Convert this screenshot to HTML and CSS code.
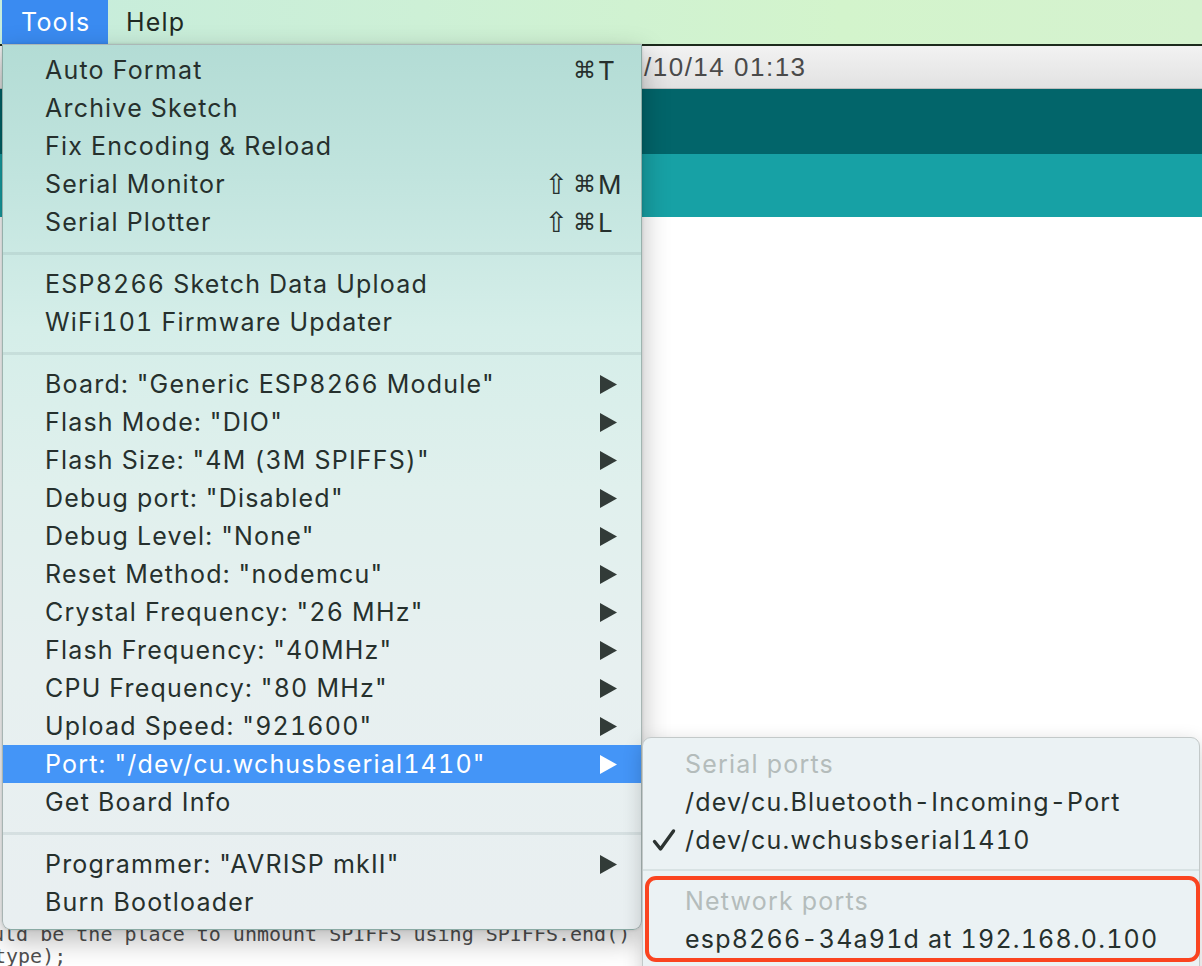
FILE: index.html
```html
<!DOCTYPE html>
<html>
<head>
<meta charset="utf-8">
<title>Arduino Tools menu</title>
<link rel="stylesheet" href="styles.css">
</head>
<body>
<div class="screen">
  <header class="menubar">
    <div class="mb-item active">Tools</div>
    <div class="mb-item">Help</div>
  </header>

  <div class="window">
    <div class="titlebar"><span class="title">/10/14 01:13</span></div>
    <div class="toolbar"></div>
    <div class="tabbar"></div>
    <div class="editor">
      <div class="code-line first">ould be the place to unmount SPIFFS using SPIFFS.end()</div>
      <div class="code-line second">type);</div>
    </div>
  </div>

  <nav class="menu main-menu">
    <div class="mi"><span class="label">Auto Format</span><span class="sc"><span class="mods"><span class="mod">⌘</span></span><span class="key">T</span></span></div>
    <div class="mi"><span class="label">Archive Sketch</span></div>
    <div class="mi"><span class="label">Fix Encoding &amp; Reload</span></div>
    <div class="mi"><span class="label">Serial Monitor</span><span class="sc"><span class="mods"><span class="mod shift">⇧</span><span class="mod">⌘</span></span><span class="key">M</span></span></div>
    <div class="mi"><span class="label">Serial Plotter</span><span class="sc"><span class="mods"><span class="mod shift">⇧</span><span class="mod">⌘</span></span><span class="key">L</span></span></div>
    <div class="sep"></div>
    <div class="mi"><span class="label">ESP8266 Sketch Data Upload</span></div>
    <div class="mi"><span class="label">WiFi101 Firmware Updater</span></div>
    <div class="sep"></div>
    <div class="mi"><span class="label">Board: "Generic ESP8266 Module"</span><svg class="arrow" viewBox="0 0 17 19"><polygon points="0,0 17,9.5 0,19"/></svg></div>
    <div class="mi"><span class="label">Flash Mode: "DIO"</span><svg class="arrow" viewBox="0 0 17 19"><polygon points="0,0 17,9.5 0,19"/></svg></div>
    <div class="mi"><span class="label">Flash Size: "4M (3M SPIFFS)"</span><svg class="arrow" viewBox="0 0 17 19"><polygon points="0,0 17,9.5 0,19"/></svg></div>
    <div class="mi"><span class="label">Debug port: "Disabled"</span><svg class="arrow" viewBox="0 0 17 19"><polygon points="0,0 17,9.5 0,19"/></svg></div>
    <div class="mi"><span class="label">Debug Level: "None"</span><svg class="arrow" viewBox="0 0 17 19"><polygon points="0,0 17,9.5 0,19"/></svg></div>
    <div class="mi"><span class="label">Reset Method: "nodemcu"</span><svg class="arrow" viewBox="0 0 17 19"><polygon points="0,0 17,9.5 0,19"/></svg></div>
    <div class="mi"><span class="label">Crystal Frequency: "26 MHz"</span><svg class="arrow" viewBox="0 0 17 19"><polygon points="0,0 17,9.5 0,19"/></svg></div>
    <div class="mi"><span class="label">Flash Frequency: "40MHz"</span><svg class="arrow" viewBox="0 0 17 19"><polygon points="0,0 17,9.5 0,19"/></svg></div>
    <div class="mi"><span class="label">CPU Frequency: "80 MHz"</span><svg class="arrow" viewBox="0 0 17 19"><polygon points="0,0 17,9.5 0,19"/></svg></div>
    <div class="mi"><span class="label">Upload Speed: "921600"</span><svg class="arrow" viewBox="0 0 17 19"><polygon points="0,0 17,9.5 0,19"/></svg></div>
    <div class="mi selected"><span class="label">Port: "/dev/cu.wchusbserial1410"</span><svg class="arrow" viewBox="0 0 17 19"><polygon points="0,0 17,9.5 0,19"/></svg></div>
    <div class="mi"><span class="label">Get Board Info</span></div>
    <div class="sep"></div>
    <div class="mi"><span class="label">Programmer: "AVRISP mkII"</span><svg class="arrow" viewBox="0 0 17 19"><polygon points="0,0 17,9.5 0,19"/></svg></div>
    <div class="mi"><span class="label">Burn Bootloader</span></div>
  </nav>

  <nav class="menu submenu">
    <div class="smi header"><span class="gutter"></span><span class="label">Serial ports</span></div>
    <div class="smi"><span class="gutter"></span><span class="label">/dev/cu.Bluetooth-Incoming-Port</span></div>
    <div class="smi"><span class="gutter"><svg class="check" viewBox="0 0 24 24"><path d="M2.5 13.5 L8.5 21 L21.5 3"/></svg></span><span class="label">/dev/cu.wchusbserial1410</span></div>
    <div class="sub-sep"></div>
    <div class="net-group">
      <div class="smi header"><span class="gutter"></span><span class="label">Network ports</span></div>
      <div class="smi"><span class="gutter"></span><span class="label">esp8266-34a91d at 192.168.0.100</span></div>
    </div>
  </nav>
</div>
</body>
</html>
```

FILE: styles.css
```css
* { box-sizing: border-box; }

html, body {
  margin: 0;
  padding: 0;
}

body {
  width: 1202px;
  height: 966px;
  overflow: hidden;
  background: #ffffff;
  font-family: "Inter", "Noto Sans", sans-serif;
}

.screen {
  position: relative;
  width: 1202px;
  height: 966px;
  overflow: hidden;
  display: flex;
  flex-direction: column;
}

/* ---------- top menu bar ---------- */
.menubar {
  height: 44px;
  flex: none;
  display: flex;
  align-items: stretch;
  padding-left: 2px;
  background: linear-gradient(90deg, #c6ecdc 0%, #cdf0d6 35%, #d3f4cc 70%, #d5f2cf 100%);
}

.mb-item {
  display: flex;
  align-items: center;
  padding: 0 18px;
  font-size: 25px;
  letter-spacing: 1.2px;
  color: #1f2a24;
}

.mb-item.active {
  width: 106px;
  padding-left: 19px;
  background: #3a8bf1;
  color: #ffffff;
}

/* ---------- background window ---------- */
.window {
  flex: 1;
  display: flex;
  flex-direction: column;
}

.titlebar {
  height: 45px;
  flex: none;
  border-top: 2px solid #1c2a1c;
  border-bottom: 1px solid #bdbdbd;
  background: linear-gradient(180deg, #f2f2f2 0%, #e2e2e2 100%);
  display: flex;
  align-items: center;
  padding-left: 644px;
}

.title {
  font-family: "Liberation Sans", Arial, sans-serif;
  font-size: 26px;
  letter-spacing: 1.5px;
  color: #4a4a4a;
}

.toolbar {
  height: 65px;
  flex: none;
  background: #02656a;
}

.tabbar {
  height: 63px;
  flex: none;
  background: #17a1a5;
}

.editor {
  flex: 1;
  background: #ffffff;
  padding-top: 706px;
  font-family: "DejaVu Sans Mono", monospace;
  font-size: 20px;
  line-height: 22px;
  color: #505050;
}

.code-line { white-space: pre; }
.code-line.first { margin-left: -20px; }
.code-line.second { margin-left: -6px; }

/* ---------- menus ---------- */
.menu {
  position: absolute;
  font-family: "Inter", "Noto Sans", sans-serif;
  font-size: 25px;
  letter-spacing: 1.2px;
  font-variant-numeric: tabular-nums;
  color: #26302d;
}

.main-menu {
  left: 2px;
  top: 44px;
  width: 640px;
  padding: 6px 0 8px;
  border: 1px solid rgba(90, 110, 105, 0.45);
  border-top-color: rgba(110, 130, 125, 0.5);
  border-radius: 0 0 9px 9px;
  background: linear-gradient(180deg, #b3dcd5 0%, #c1e4de 15%, #d5eee9 32%, #e0f0ed 50%, #e7f0f0 70%, #e9eff1 100%);
  box-shadow: 0 10px 28px rgba(0, 0, 0, 0.28), 0 0 3px rgba(0, 0, 0, 0.15);
}

.mi {
  height: 38px;
  display: flex;
  align-items: center;
  padding: 0 24px 0 42px;
  white-space: nowrap;
}

.mi .label { flex: 1; }

.mi.selected {
  background: #4495f7;
  color: #ffffff;
}

.sc {
  display: flex;
  align-items: center;
  gap: 2px;
  margin-right: -11px;
}

.mods {
  display: flex;
  align-items: center;
  justify-content: flex-end;
  gap: 5px;
  font-family: "DejaVu Sans", sans-serif;
  font-size: 23px;
  letter-spacing: 0;
}

.mod.shift {
  font-size: 28px;
}

.key {
  width: 30px;
  letter-spacing: 0;
  font-size: 26px;
}

.arrow {
  width: 17px;
  height: 19px;
  fill: #323b38;
}

.mi.selected .arrow { fill: #ffffff; }

.sep {
  height: 24px;
  display: flex;
  align-items: center;
}

.sep::before {
  content: "";
  flex: 1;
  height: 3px;
  background: rgba(120, 140, 140, 0.16);
}

/* ---------- submenu ---------- */
.submenu {
  left: 642px;
  top: 737px;
  width: 558px;
  height: 260px;
  padding-top: 7px;
  border: 1px solid #c3c9c9;
  border-radius: 9px 9px 0 0;
  background: #ebf2f4;
  box-shadow: 0 6px 20px rgba(0, 0, 0, 0.2);
}

.smi {
  height: 38px;
  display: flex;
  align-items: center;
  padding-left: 9px;
  white-space: nowrap;
}

.gutter {
  width: 33px;
  flex: none;
  display: flex;
  align-items: center;
}

.check {
  width: 24px;
  height: 24px;
  fill: none;
  stroke: #2c3331;
  stroke-width: 3.4;
  stroke-linecap: round;
  stroke-linejoin: round;
}

.smi.header { color: #b4bcbb; }

.sub-sep {
  height: 17px;
  padding-top: 10px;
}

.sub-sep::before {
  content: "";
  display: block;
  height: 2px;
  background: rgba(120, 140, 140, 0.16);
}

.net-group {
  margin: 0 -1px 0 2px;
  padding-top: 2px;
  border: 4px solid #fa4420;
  border-radius: 11px;
}

.net-group .smi { padding-left: 3px; }
```
